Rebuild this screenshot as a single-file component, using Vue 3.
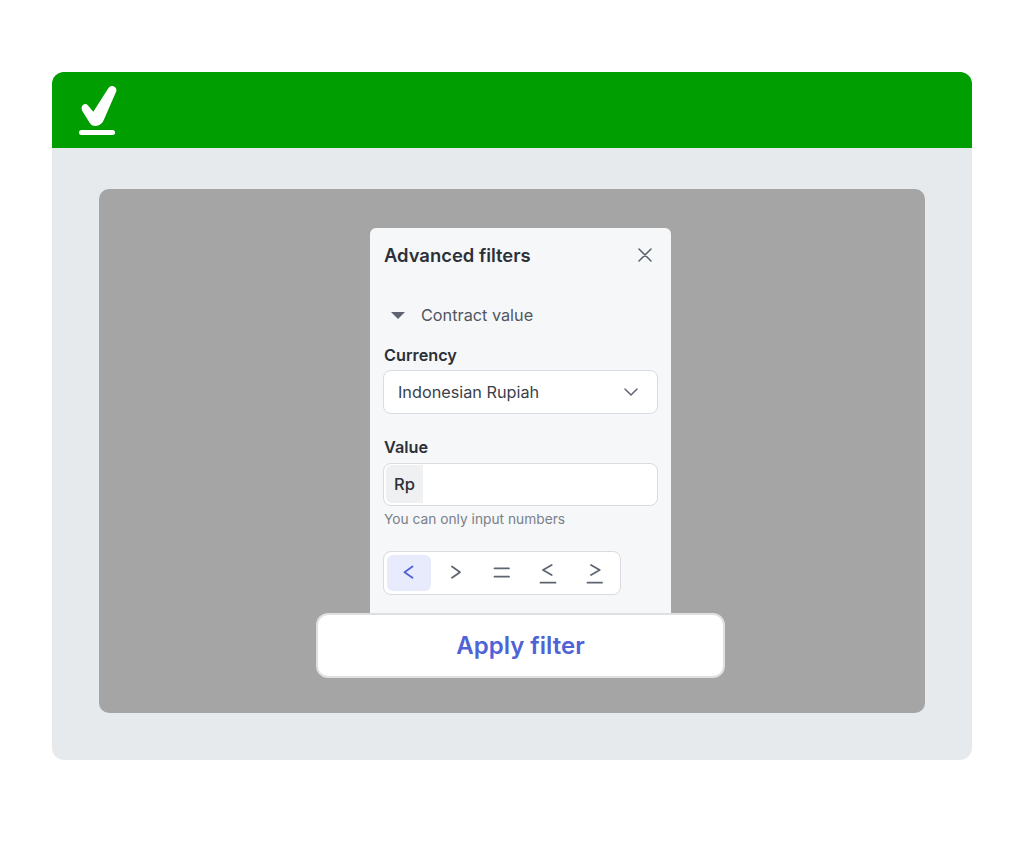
<template>
  <div class="page">
    <div class="window">
      <header class="topbar">
        <svg class="logo" width="40" height="52" viewBox="0 0 40 52">
          <path fill="#fff" d="M30.300 3.300 Q32 .5 35 1 Q39 2.500 38.400 6 L26 34.500 Q23.500 41 17.500 41 Q13.500 41 11.500 37.500 L4 25.500 Q2.800 22 5 20 Q7.500 18 10 20.500 L15.300 26.700 Z" />
          <path d="M3.500 47.500 H34.500" stroke="#fff" stroke-width="5" stroke-linecap="round" />
        </svg>
      </header>

      <main class="content">
        <div class="overlay">
          <section class="dialog">
            <div class="dialog-head">
              <h2>Advanced filters</h2>
              <svg width="16" height="16" viewBox="0 0 16 16" fill="none" stroke="#5f6570" stroke-width="1.6" stroke-linecap="round">
                <path d="M2 2 L14 14 M14 2 L2 14" />
              </svg>
            </div>

            <div class="section-toggle">
              <span class="caret"></span>
              <span>Contract value</span>
            </div>

            <label class="field-label">Currency</label>
            <div class="select-box">
              <span>Indonesian Rupiah</span>
              <svg width="16" height="10" viewBox="0 0 16 10" fill="none" stroke="#5f6570" stroke-width="1.5" stroke-linecap="round" stroke-linejoin="round">
                <path d="M2 2 L8 8 L14 2" />
              </svg>
            </div>

            <label class="field-label value-label">Value</label>
            <div class="input-box">
              <span class="prefix">Rp</span>
            </div>
            <p class="hint">You can only input numbers</p>

            <div class="operators">
              <button
                v-for="op in operators"
                :key="op.key"
                type="button"
                class="op-btn"
                :class="{ active: op.key === selected }"
              >
                <svg width="20" height="26" viewBox="0 0 20 26" fill="none" stroke="currentColor" stroke-width="1.8" stroke-linecap="round" stroke-linejoin="round">
                  <path :d="op.path" />
                </svg>
              </button>
            </div>
          </section>

          <button type="button" class="apply-btn">Apply filter</button>
        </div>
      </main>
    </div>
  </div>
</template>

<script setup>
import { ref } from 'vue'

const selected = ref('lt')

const operators = [
  { key: 'lt', path: 'M13.500 6.500 L5.500 12.200 L13.500 17.800' },
  { key: 'gt', path: 'M7 6.500 L15 12.200 L7 17.800' },
  { key: 'eq', path: 'M2.500 8.300 H17 M2.500 16.700 H17' },
  { key: 'lte', path: 'M12.700 5 L4 10 L12.700 15 M1.500 22.700 H16.500' },
  { key: 'gte', path: 'M6 5 L14.700 10 L6 15 M2.500 22.700 H17' },
]
</script>

<style>
html,
body {
  margin: 0;
  background: #fff;
}
</style>

<style scoped>
* {
  box-sizing: border-box;
}

.page {
  width: 1024px;
  height: 854px;
  padding: 72px 52px 94px;
  font-family: Inter, "Liberation Sans", sans-serif;
  color: #2b2f38;
}

.window {
  height: 688px;
  display: flex;
  flex-direction: column;
  border-radius: 12px;
  overflow: hidden;
  background: #e7eaed;
}

.topbar {
  height: 76px;
  padding: 13px 0 0 26px;
  background: #009e00;
}

.logo {
  display: block;
}

.content {
  flex: 1;
  padding: 41px 47px 47px;
}

.overlay {
  height: 524px;
  padding: 39px 0 0 17px;
  display: flex;
  flex-direction: column;
  align-items: center;
  border-radius: 10px;
  background: #a5a5a5;
}

.dialog {
  width: 301px;
  height: 385px;
  padding: 0 13px 0 14px;
  flex-shrink: 0;
  border-radius: 6px 6px 0 0;
  background: #f5f7f9;
}

.dialog-head {
  height: 54px;
  display: flex;
  align-items: center;
  justify-content: space-between;
  padding-right: 5px;
}

.dialog-head h2 {
  margin: 0;
  font-size: 18.400px;
  font-weight: 600;
  line-height: 24px;
}

.section-toggle {
  height: 24px;
  margin-top: 21px;
  display: flex;
  align-items: center;
  gap: 16px;
  padding-left: 7px;
  font-size: 16.250px;
  color: #50555f;
}

.caret {
  width: 0;
  height: 0;
  border-left: 7px solid transparent;
  border-right: 7px solid transparent;
  border-top: 7px solid #5f6570;
}

.field-label {
  display: block;
  margin-top: 16px;
  font-size: 16.250px;
  font-weight: 600;
  line-height: 24px;
}

.value-label {
  margin-top: 21px;
}

.select-box {
  height: 44px;
  margin-top: 3px;
  margin-left: -1px;
  padding: 0 18px 0 14px;
  display: flex;
  align-items: center;
  justify-content: space-between;
  border: 1px solid #d8dbe0;
  border-radius: 8px;
  background: #fff;
  font-size: 16.250px;
  color: #3a3f49;
}

.input-box {
  height: 43px;
  margin-top: 4px;
  margin-left: -1px;
  padding: 1px 2px 2px;
  display: flex;
  border: 1px solid #d8dbe0;
  border-radius: 8px;
  background: #fff;
}

.prefix {
  width: 37px;
  display: flex;
  align-items: center;
  justify-content: center;
  border-radius: 6px 0 0 6px;
  background: #eff0f1;
  font-size: 16.500px;
  font-weight: 500;
}

.hint {
  margin: 4px 0 0;
  font-size: 13.750px;
  line-height: 18px;
  color: #7b8088;
}

.operators {
  width: 238px;
  height: 44px;
  margin-top: 23px;
  margin-left: -1px;
  padding: 3px;
  display: flex;
  gap: 3px;
  border: 1px solid #d8dbe0;
  border-radius: 8px;
  background: #fff;
}

.op-btn {
  width: 44px;
  padding: 0;
  display: flex;
  align-items: center;
  justify-content: center;
  border: 0;
  border-radius: 6px;
  background: transparent;
  color: #5f6570;
}

.op-btn.active {
  background: #e8ebfb;
  color: #4f63d6;
}

.apply-btn {
  width: 409px;
  height: 65px;
  flex-shrink: 0;
  padding: 0;
  border: 2px solid #dddfe1;
  border-radius: 12px;
  background: #fff;
  font-family: inherit;
  font-size: 24px;
  font-weight: 600;
  color: #4f63d6;
}
</style>
